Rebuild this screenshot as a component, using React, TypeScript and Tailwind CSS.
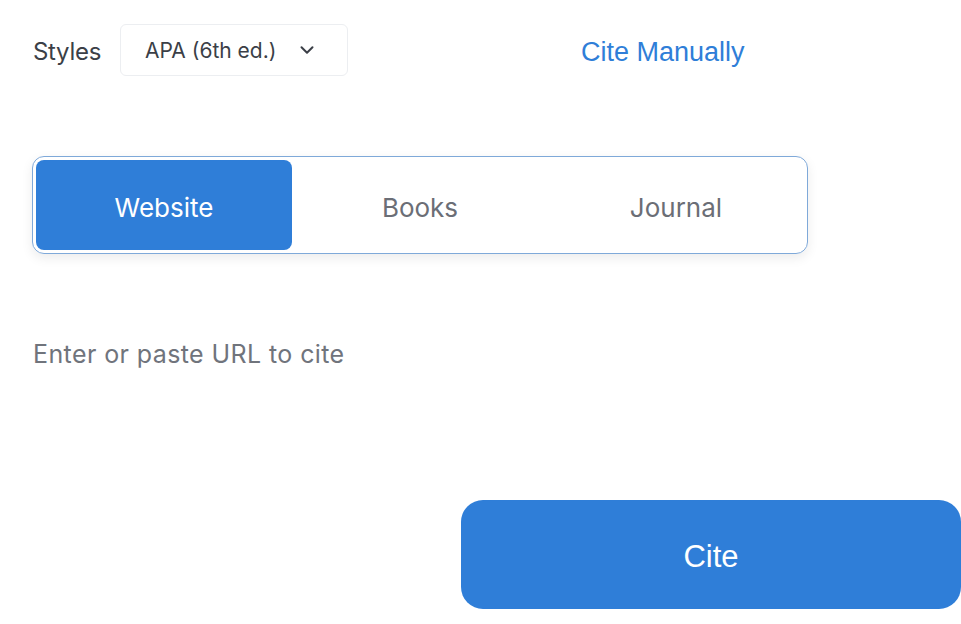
import { ChevronDown } from "lucide-react";

const TABS = ["Website", "Books", "Journal"];

export default function App() {
  return (
    <main className="w-[961px] h-[624px] bg-white font-['Inter',sans-serif] text-[#3b3f47] overflow-hidden">
      {/* top row */}
      <div className="flex items-center pt-[24px] pl-[33px]">
        <div className="text-[24px] w-[87px] tracking-[-0.3px] pt-[4px]">Styles</div>
        <div className="flex items-center h-[52px] w-[228px] border border-[#eceef1] rounded-[6px] pl-[24px] gap-[20px]">
          <span className="text-[21px] text-[#3b3f47] pt-[2px]">APA (6th ed.)</span>
          <ChevronDown size={22} strokeWidth={2.2} className="text-[#3b3f47]" />
        </div>
        <div className="ml-[233px] text-[27px] text-[#2f7ed8] font-['Liberation_Sans',sans-serif] pt-[4px]">
          Cite Manually
        </div>
      </div>

      {/* type tabs */}
      <div className="ml-[32px] mt-[80px] w-[776px] h-[98px] border border-[#7fa9d9] rounded-[12px] p-[3px] grid grid-cols-3 shadow-[0_4px_12px_rgba(0,0,0,0.08)]">
        {TABS.map((tab, i) => (
          <div
            key={tab}
            className={
              i === 0
                ? "flex items-center justify-center pt-[4px] rounded-[8px] bg-[#2f7ed8] text-white text-[26px]"
                : "flex items-center justify-center pt-[4px] text-[#6b6e76] text-[26px]"
            }
          >
            {tab}
          </div>
        ))}
      </div>

      {/* url input */}
      <input
        className="block mt-[82px] ml-[33px] w-[700px] text-[25px] tracking-[0.4px] outline-none placeholder:text-[#70747c]"
        placeholder="Enter or paste URL to cite"
      />

      <div className="flex justify-end mt-[126px]">
        <button className="w-[500px] h-[109px] pt-[6px] rounded-[22px] bg-[#2f7ed8] text-white text-[31px] font-['Liberation_Sans',sans-serif]">
          Cite
        </button>
      </div>
    </main>
  );
}
